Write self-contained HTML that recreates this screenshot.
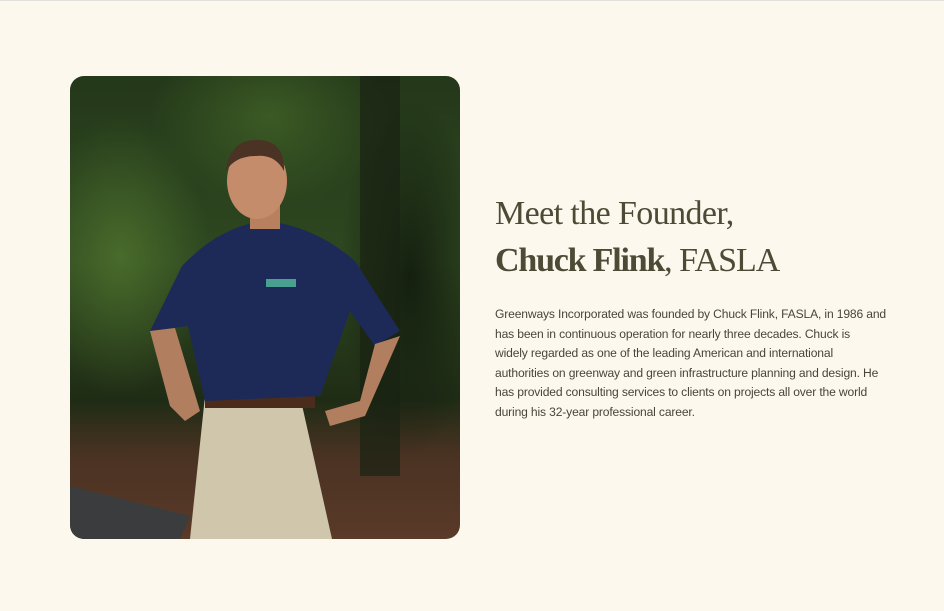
<!DOCTYPE html>
<html><head><style>
html,body{margin:0;padding:0}
body{width:944px;height:611px;background:#fcf8ed;position:relative;overflow:hidden;font-family:"Liberation Sans",sans-serif}
.top{position:absolute;left:0;top:0;width:944px;height:1px;background:#e2e0da}
.photo{position:absolute;left:70px;top:76px;width:390px;height:463px;border-radius:14px;overflow:hidden;
background:
radial-gradient(ellipse 90px 140px at 50px 180px,rgba(90,130,50,.6),transparent),
radial-gradient(ellipse 120px 90px at 200px 40px,rgba(80,120,45,.5),transparent),
radial-gradient(ellipse 70px 180px at 340px 200px,rgba(15,22,12,.8),transparent),
linear-gradient(180deg,#24381a 0%,#2e4820 40%,#1f2c15 70%,#4a3222 82%,#5a3a28 100%)}
h1{position:absolute;left:495px;top:190px;margin:0;font-family:"Liberation Serif",serif;font-weight:normal;font-size:34px;line-height:47px;color:#4d4a36;letter-spacing:-0.6px}
h1 b{font-weight:bold;letter-spacing:-1.2px}
h1 span{letter-spacing:-1px}
p{position:absolute;left:495px;top:305px;margin:0;font-size:12.1px;line-height:19.6px;color:#48453a;white-space:nowrap;letter-spacing:-0.15px}
</style></head><body>
<div class="top"></div>
<div class="photo">
<svg width="390" height="463" viewBox="0 0 390 463">
<path d="M0 410 L120 440 L110 463 L0 463Z" fill="#3a3c3e"/>
<rect x="290" y="0" width="40" height="400" fill="#1a2212" opacity=".7"/>
<path d="M135 320 L230 320 L262 463 L120 463Z" fill="#cfc6ac"/>
<rect x="135" y="318" width="110" height="14" fill="#4a2b1c"/>
<path d="M112 190 Q150 150 195 145 Q245 150 285 185 L330 255 L305 270 L280 235 L250 320 L135 325 L118 250 L80 255Z" fill="#1d2a58"/>
<path d="M80 255 L100 330 L115 345 L130 335 L105 252Z" fill="#b17e5f"/>
<path d="M305 268 L290 325 L255 335 L260 350 L295 340 L330 260Z" fill="#b17e5f"/>
<rect x="180" y="128" width="30" height="25" fill="#b8805f"/>
<ellipse cx="187" cy="105" rx="30" ry="38" fill="#c58c6b"/>
<path d="M156 95 Q160 62 190 64 Q215 66 214 95 Q205 78 186 80 Q165 80 156 95Z" fill="#4a3324"/>
<rect x="196" y="203" width="30" height="8" fill="#4aa090"/>
</svg>
</div>
<h1>Meet the Founder,<br><b>Chuck Flink</b><span>, FASLA</span></h1>
<p>Greenways Incorporated was founded by Chuck Flink, FASLA, in 1986 and<br>has been in continuous operation for nearly three decades. Chuck is<br>widely regarded as one of the leading American and international<br>authorities on greenway and green infrastructure planning and design. He<br>has provided consulting services to clients on projects all over the world<br>during his 32-year professional career.</p>
</body></html>
